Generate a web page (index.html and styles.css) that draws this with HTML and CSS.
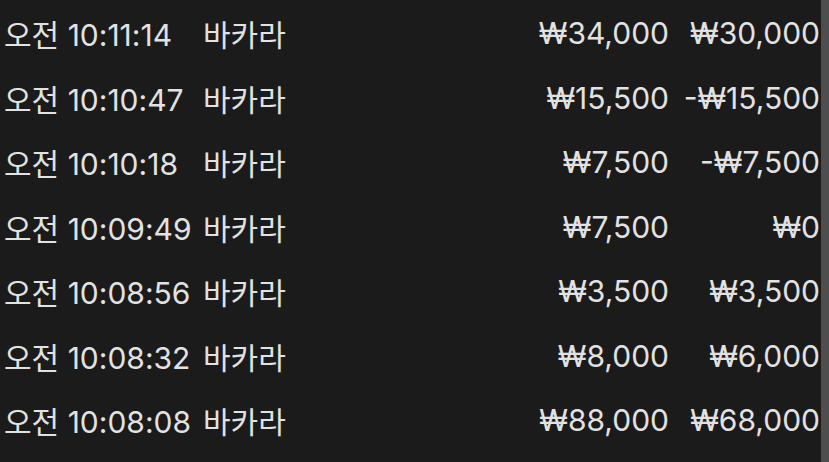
FILE: index.html
```html
<!DOCTYPE html>
<html lang="ko">
<head>
<meta charset="utf-8">
<link rel="stylesheet" href="styles.css">
</head>
<body>
<div class="wrap">
  <div class="list">
    <div class="row"><span class="time">오전 10:11:14</span><span class="game">바카라</span><span class="amt">₩34,000</span><span class="res">₩30,000</span></div>
    <div class="row"><span class="time">오전 10:10:47</span><span class="game">바카라</span><span class="amt">₩15,500</span><span class="res">-₩15,500</span></div>
    <div class="row"><span class="time">오전 10:10:18</span><span class="game">바카라</span><span class="amt">₩7,500</span><span class="res">-₩7,500</span></div>
    <div class="row"><span class="time">오전 10:09:49</span><span class="game">바카라</span><span class="amt">₩7,500</span><span class="res">₩0</span></div>
    <div class="row"><span class="time">오전 10:08:56</span><span class="game">바카라</span><span class="amt">₩3,500</span><span class="res">₩3,500</span></div>
    <div class="row"><span class="time">오전 10:08:32</span><span class="game">바카라</span><span class="amt">₩8,000</span><span class="res">₩6,000</span></div>
    <div class="row"><span class="time">오전 10:08:08</span><span class="game">바카라</span><span class="amt">₩88,000</span><span class="res">₩68,000</span></div>
  </div>
  <div class="bar"></div>
</div>
</body>
</html>
```

FILE: styles.css
```css
html, body {
  margin: 0;
  padding: 0;
  background: #1b1b1b;
}
.wrap {
  display: flex;
  width: 829px;
  height: 462px;
  overflow: hidden;
}
.list {
  flex: 1;
  padding: 1px 1px 0 4px;
  font-family: Inter, "Noto Sans CJK KR", sans-serif;
  font-size: 30px;
  color: #e2e2e2;
}
.row {
  display: grid;
  grid-template-columns: 199px 1fr 151px 151px;
  align-items: center;
  height: 64.5px;
  white-space: nowrap;
}
.amt, .res {
  text-align: right;
}
.bar {
  width: 8px;
  background: #4e4e4e;
}
```
